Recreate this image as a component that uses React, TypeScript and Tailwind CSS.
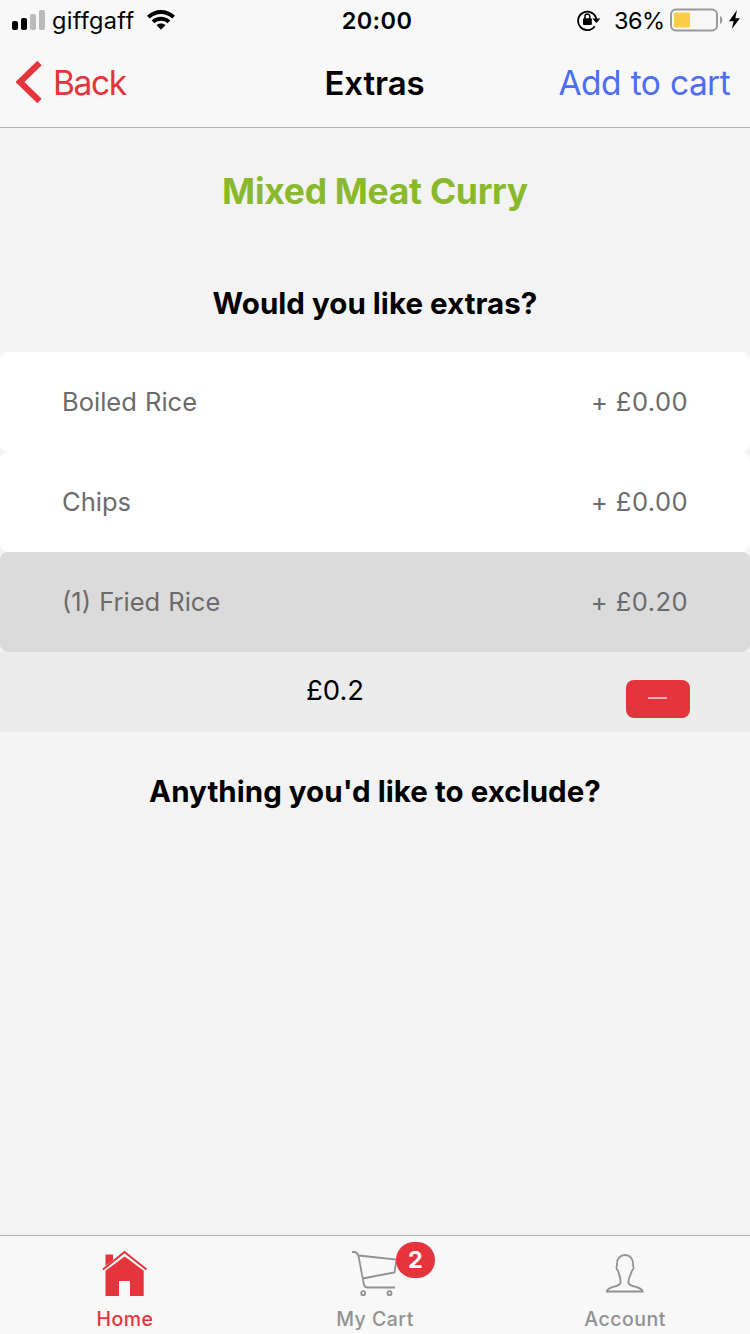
import type { ReactNode } from "react";

type Extra = { name: string; price: string; selected?: boolean };

const extras: Extra[] = [
  { name: "Boiled Rice", price: "+ £0.00" },
  { name: "Chips", price: "+ £0.00" },
  { name: "(1) Fried Rice", price: "+ £0.20", selected: true },
];

function StatusBar() {
  return (
    <div className="grid h-[41px] grid-cols-3 items-center">
      <div className="flex items-center pl-3">
        <svg className="mb-px" width="33" height="20" viewBox="0 0 33 20">
          <rect x="0" y="11" width="6" height="9" rx="2" fill="#000" />
          <rect x="9" y="8" width="6" height="12" rx="2" fill="#000" />
          <rect x="18" y="4" width="6" height="16" rx="2" fill="#bbb" />
          <rect x="27" y="0" width="6" height="20" rx="2" fill="#bbb" />
        </svg>
        <span className="ml-[7px] w-[82px] text-[23.5px] leading-[41px] tracking-[0.3px]">giffgaff</span>
        <svg className="mb-px ml-[13px]" width="28" height="20" viewBox="0 0 28 20">
          <path d="M0 5.7C8-1.9 20-1.9 28 5.7L25.2 8.5C18.8 2.5 9.2 2.5 2.8 8.5Z" />
          <path d="M4.7 10.4C10 5.6 18 5.6 23.3 10.4L20.5 13.2C16.8 10 11.2 10 7.5 13.2Z" />
          <path d="M9.4 15.1C12 12.9 16 12.9 18.6 15.1L14 19.8Z" />
        </svg>
      </div>
      <div className="pl-1 text-center text-[23.5px] font-semibold leading-[41px] tracking-[0.4px]">20:00</div>
      <div className="flex items-center justify-end pr-[10px]">
        <svg className="mb-[2px]" width="24" height="22" viewBox="0 0 24 22">
          <path d="M17.8 17.2A9.2 9.2 0 1 1 19.3 10" fill="none" stroke="#000" strokeWidth="1.8" />
          <path d="M15.3 9.6H23.4L19.4 14Z" />
          <rect x="6" y="9.2" width="8.8" height="6.8" rx="1" />
          <path d="M8 10V7.5a2.4 2.4 0 0 1 4.8 0V10" fill="none" stroke="#000" strokeWidth="1.5" />
        </svg>
        <span className="ml-[13px] w-[50px] whitespace-nowrap text-[23.5px] leading-[41px] tracking-[-0.5px]">36%</span>
        <svg className="mb-px ml-[6px]" width="70" height="24" viewBox="0 0 70 24">
          <rect x="1" y="1.5" width="46" height="21" rx="5" fill="none" stroke="#999" strokeWidth="2" />
          <rect x="4" y="4.5" width="16" height="15" rx="1" fill="#f9ce45" />
          <path d="M50 8c3.2 1.5 3.2 6.5 0 8Z" fill="#999" />
          <path d="M67 2L59 13.3H63.6L61.8 21L70 10.2H65.3Z" />
        </svg>
      </div>
    </div>
  );
}

function NavBar() {
  return (
    <div className="grid h-[84px] grid-cols-3 items-center pl-4 pr-5">
      <div className="flex items-center text-[#e4343c]">
        <svg className="mb-[3px]" width="26" height="42" viewBox="0 0 26 42">
          <path d="M23.5 2L4 21L23.5 40" fill="none" stroke="currentColor" strokeWidth="6.2" />
        </svg>
        <span className="ml-[11px] text-[33.5px] leading-[84px] tracking-[-1.4px]">Back</span>
      </div>
      <div className="pl-[3px] text-center text-[33px] font-semibold leading-[84px] tracking-[-0.1px]">Extras</div>
      <div className="whitespace-nowrap text-right text-[33.5px] leading-[84px] tracking-[-0.6px] text-[#4e6ef2] [word-spacing:1px]">Add to cart</div>
    </div>
  );
}

function ExtraRow({ name, price, selected }: Extra) {
  return (
    <li
      className={`flex h-[100px] items-center justify-between rounded-lg pl-[62px] pr-[62px] text-[25.5px] text-[#6b6b6b] ${
        selected ? "bg-[#dbdbdb]" : "bg-white"
      }`}
    >
      <span className="tracking-[0px] [word-spacing:1px]">{name}</span>
      <span className="tracking-[0.45px]">{price}</span>
    </li>
  );
}

function Tab({ label, active, children }: { label: string; active?: boolean; children: ReactNode }) {
  return (
    <div className={`flex flex-1 flex-col items-center ${active ? "text-[#e4343c]" : "text-[#929292]"}`}>
      <div className="relative h-[68px] w-[100px]">{children}</div>
      <span className="text-[19.5px] font-medium leading-[30px] tracking-[0.5px]">{label}</span>
    </div>
  );
}

export default function App() {
  return (
    <div className="flex h-[1334px] w-[750px] flex-col bg-[#f3f3f3] font-['Inter',sans-serif] text-black">
      <header className="h-[128px] border-b border-[#b2b2b2] bg-[#f8f8f8]">
        <StatusBar />
        <NavBar />
      </header>
      <main className="flex flex-1 flex-col">
        <h1 className="h-[128px] text-center text-[35.5px] font-bold leading-[128px] tracking-[-0.3px] text-[#8ab92d]">
          Mixed Meat Curry
        </h1>
        <h2 className="h-[96px] text-center text-[29.5px] font-bold leading-[94px] tracking-[0.04px]">Would you like extras?</h2>
        <ul>
          {extras.map((extra) => (
            <ExtraRow key={extra.name} {...extra} />
          ))}
        </ul>
        <div className="flex h-20 justify-between bg-[#ececec] pl-[306px] pr-[60px]">
          <span className="text-[27.5px] leading-[77px]">£0.2</span>
          <button className="mt-7 flex h-[38px] w-16 items-center justify-center rounded-lg bg-[#e4343c]" aria-label="Remove">
            <span className="mb-[2px] mr-px h-[2px] w-[19px] bg-[#f3b0b4]" />
          </button>
        </div>
        <h2 className="h-[120px] text-center text-[29.5px] font-bold leading-[118px] tracking-[0.04px]">Anything you'd like to exclude?</h2>
      </main>
      <nav className="flex h-[99px] border-t border-[#b2b2b2] bg-[#f8f8f8]">
        <Tab label="Home" active>
          <svg width="100" height="68" viewBox="75 1236 100 68" fill="currentColor">
            <path d="M105.5 1254.5H113V1260L105.5 1266Z" />
            <path d="M103 1269.5L124.5 1252L146.5 1269.5" fill="none" stroke="currentColor" strokeWidth="2" />
            <path d="M105.5 1270.8L124.7 1256.5L143.7 1270.8V1296H130V1281H119V1296H105.5Z" />
          </svg>
        </Tab>
        <Tab label="My Cart">
          <svg width="100" height="68" viewBox="325 1236 100 68" fill="none" stroke="currentColor" strokeWidth="1.8">
            <path d="M352 1252H354.5Q357.500 1252.500 358.500 1256L363.800 1284Q364.500 1287.500 367.500 1287.500H395M358.500 1255.500L396.500 1259.500L394.500 1272.500L362.500 1278.500" />
            <circle cx="363.2" cy="1293.2" r="2" />
            <circle cx="389.5" cy="1293.2" r="2" />
          </svg>
          <span className="absolute left-[71px] top-[6px] h-9 w-[39px] rounded-full bg-[#e4343c] text-center text-[23.5px] font-bold leading-9 text-white">
            2
          </span>
        </Tab>
        <Tab label="Account">
          <svg width="100" height="68" viewBox="575 1236 100 68" fill="none" stroke="currentColor" strokeWidth="1.8">
            <path d="M606.800 1291.500C607.500 1286 619.500 1287.500 620.500 1283C621 1277 619 1275 618 1270.500C616.200 1269.500 616.200 1267 617 1265.500C615.500 1251.500 634.500 1251.500 633 1265.500C633.800 1267 633.800 1269.500 632 1270.500C631 1275 628 1277 628.500 1283C629.500 1287.500 641.500 1286 642.700 1291.500Z" />
          </svg>
        </Tab>
      </nav>
    </div>
  );
}
